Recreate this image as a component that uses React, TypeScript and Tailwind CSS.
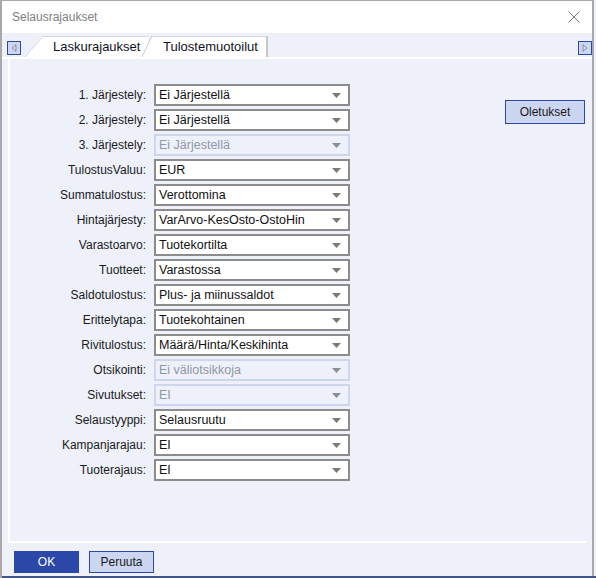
import React from "react";

type Row = { label: string; value: string; disabled?: boolean };

const rows: Row[] = [
  { label: "1. Järjestely:", value: "Ei Järjestellä" },
  { label: "2. Järjestely:", value: "Ei Järjestellä" },
  { label: "3. Järjestely:", value: "Ei Järjestellä", disabled: true },
  { label: "TulostusValuu:", value: "EUR" },
  { label: "Summatulostus:", value: "Verottomina" },
  { label: "Hintajärjesty:", value: "VarArvo-KesOsto-OstoHin" },
  { label: "Varastoarvo:", value: "Tuotekortilta" },
  { label: "Tuotteet:", value: "Varastossa" },
  { label: "Saldotulostus:", value: "Plus- ja miinussaldot" },
  { label: "Erittelytapa:", value: "Tuotekohtainen" },
  { label: "Rivitulostus:", value: "Määrä/Hinta/Keskihinta" },
  { label: "Otsikointi:", value: "Ei väliotsikkoja", disabled: true },
  { label: "Sivutukset:", value: "EI", disabled: true },
  { label: "Selaustyyppi:", value: "Selausruutu" },
  { label: "Kampanjarajau:", value: "EI" },
  { label: "Tuoterajaus:", value: "EI" },
];

function Arrow({ dir }: { dir: "left" | "right" }) {
  return (
    <div className="w-[14px] h-[14px] bg-[#cfd7f0] border border-[#2b4aa8] flex items-center justify-center">
      <svg width="6" height="8" viewBox="0 0 6 8">
        {dir === "left" ? (
          <path d="M5 0.5 L1 4 L5 7.5 Z" fill="none" stroke="#8a8fa0" strokeWidth="1" />
        ) : (
          <path d="M1 0.5 L5 4 L1 7.5 Z" fill="none" stroke="#8a8fa0" strokeWidth="1" />
        )}
      </svg>
    </div>
  );
}

function Tab({ label, first }: { label: string; first?: boolean }) {
  return (
    <div className={`flex items-end h-[21px] ${first ? "" : "-ml-[6px]"}`}>
      <svg width={first ? 18 : 10} height="21" viewBox={first ? "0 0 18 21" : "0 0 10 21"} className="block">
        {first ? (
          <>
            <path d="M0 21 L18 0 L18 21 Z" fill="#ffffff" />
            <path d="M0 21 L18 0" stroke="#d4d8e4" strokeWidth="1" />
          </>
        ) : (
          <>
            <path d="M0 21 L10 0 L10 21 Z" fill="#ffffff" />
            <path d="M0 21 L10 0" stroke="#c8ccd8" strokeWidth="1" />
          </>
        )}
      </svg>
      <div
        className={`h-[21px] bg-white border-t border-[#d4d8e4] flex items-center text-[13px] text-[#111122] ${
          first ? "w-[105px] pl-[10px]" : "w-[116px] pl-[11px] border-r-2 border-r-[#c8c8c8]"
        }`}
      >
        {label}
      </div>
    </div>
  );
}

function Select({ value, disabled }: { value: string; disabled?: boolean }) {
  return (
    <div
      className={`w-[196px] h-[22px] flex items-center justify-between pl-[3px] pr-[7px] border-2 ${
        disabled
          ? "border-[#cdd6ec] bg-[#eef1fa] text-[#9097a8]"
          : "border-[#8c8c8c] bg-white text-[#111111]"
      }`}
    >
      <span className="text-[12.5px] leading-none">{value}</span>
      <svg width="9" height="5" viewBox="0 0 9 5">
        <path d="M0 0 L9 0 L4.5 5 Z" fill={disabled ? "#8a8d96" : "#7a7a7a"} />
      </svg>
    </div>
  );
}

export default function App() {
  return (
    <div
      className="w-[596px] h-[578px] flex flex-col bg-[#eef1fa] border-l-2 border-l-[#a8a8a8] relative overflow-hidden"
      style={{ fontFamily: '"Liberation Sans", Arial, sans-serif' }}
    >
      <div className="flex flex-col flex-1 border-r-2 border-r-[#a8a8a8] mr-[2px]">
        {/* title bar */}
        <div className="h-[33px] bg-white flex items-center justify-between pl-[10px] pr-[12px] border-t border-[#a8a8a8]">
          <span className="text-[12px] text-[#808080]">Selausrajaukset</span>
          <svg width="12" height="12" viewBox="0 0 12 12">
            <path d="M0.5 0.5 L11.5 11.5 M11.5 0.5 L0.5 11.5" stroke="#7a7a7a" strokeWidth="1" />
          </svg>
        </div>

        {/* tab strip */}
        <div className="h-[26px] flex items-end justify-between pl-[5px] pr-0 border-b-2 border-white">
          <div className="flex items-end h-full">
            <div className="self-start mt-[8px]">
              <Arrow dir="left" />
            </div>
            <div className="ml-[4px] flex items-end">
              <Tab label="Laskurajaukset" first />
              <Tab label="Tulostemuotoilut" />
            </div>
          </div>
          <div className="self-start mt-[8px]">
            <Arrow dir="right" />
          </div>
        </div>

        {/* panel */}
        <div className="flex-1 mx-[6px] border-l-2 border-b-2 border-white flex pt-[25px]">
          <div className="flex flex-col gap-[3px]">
            {rows.map((r) => (
              <div key={r.label} className="flex items-center h-[22px]">
                <div className="w-[136px] text-right text-[12px] text-[#1a1a1a]">{r.label}</div>
                <div className="ml-[8px]">
                  <Select value={r.value} disabled={r.disabled} />
                </div>
              </div>
            ))}
          </div>
          <div className="ml-auto mr-[1px] mt-[15px]">
            <button className="w-[80px] h-[24px] bg-[#cdd6f0] border border-[#2b4aa8] text-[12px] text-[#1a1a1a]">
              Oletukset
            </button>
          </div>
        </div>

        {/* buttons */}
        <div className="h-[33px] flex items-start gap-[10px] pl-[12px] pt-[8px]">
          <button className="w-[65px] h-[22px] bg-[#2b48a8] text-white text-[12px]">OK</button>
          <button className="w-[65px] h-[22px] bg-[#cdd6f0] border border-[#2b4aa8] text-[12px] text-[#1a1a1a]">
            Peruuta
          </button>
        </div>
      </div>
      <div className="h-[2px] bg-[#3f568f] -ml-[2px]" />
    </div>
  );
}
